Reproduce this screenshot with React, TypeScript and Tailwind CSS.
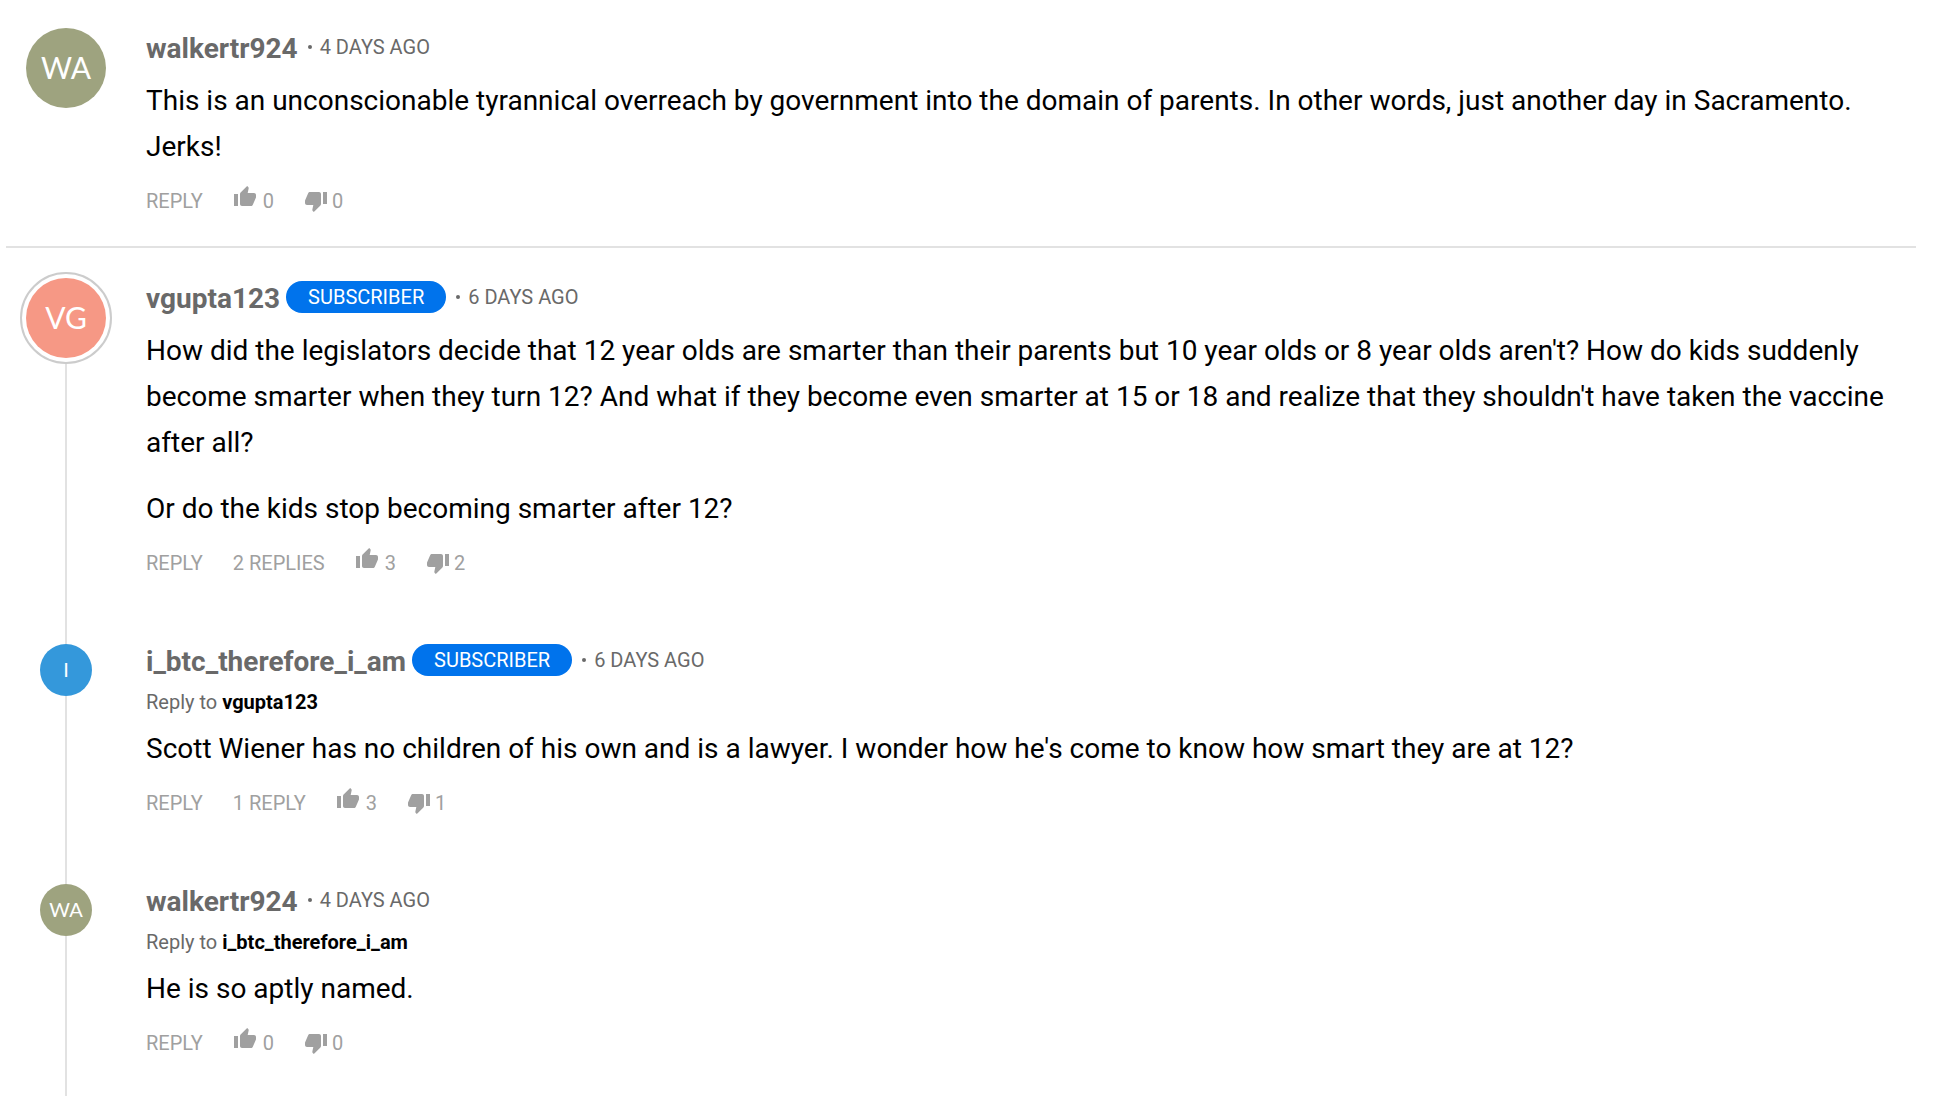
import { MdThumbDown, MdThumbUp } from "react-icons/md";

type Comment = {
  id: number;
  author: string;
  initials: string;
  color: string;
  subscriber?: boolean;
  age: string;
  replyTo?: string;
  paragraphs: string[];
  replies?: string;
  up: number;
  down: number;
};

const first: Comment = {
  id: 1,
  author: "walkertr924",
  initials: "WA",
  color: "bg-[#9ea37f]",
  age: "4 DAYS AGO",
  paragraphs: [
    "This is an unconscionable tyrannical overreach by government into the domain of parents. In other words, just another day in Sacramento. Jerks!",
  ],
  up: 0,
  down: 0,
};

const thread: Comment[] = [
  {
    id: 2,
    author: "vgupta123",
    initials: "VG",
    color: "bg-[#f69885]",
    subscriber: true,
    age: "6 DAYS AGO",
    paragraphs: [
      "How did the legislators decide that 12 year olds are smarter than their parents but 10 year olds or 8 year olds aren't? How do kids suddenly become smarter when they turn 12? And what if they become even smarter at 15 or 18 and realize that they shouldn't have taken the vaccine after all?",
      "Or do the kids stop becoming smarter after 12?",
    ],
    replies: "2 REPLIES",
    up: 3,
    down: 2,
  },
  {
    id: 3,
    author: "i_btc_therefore_i_am",
    initials: "I",
    color: "bg-[#3498db]",
    subscriber: true,
    age: "6 DAYS AGO",
    replyTo: "vgupta123",
    paragraphs: [
      "Scott Wiener has no children of his own and is a lawyer. I wonder how he's come to know how smart they are at 12?",
    ],
    replies: "1 REPLY",
    up: 3,
    down: 1,
  },
  {
    id: 4,
    author: "walkertr924",
    initials: "WA",
    color: "bg-[#9ea37f]",
    age: "4 DAYS AGO",
    replyTo: "i_btc_therefore_i_am",
    paragraphs: ["He is so aptly named."],
    up: 0,
    down: 0,
  },
];

const Avatar = ({ comment }: { comment: Comment }) => {
  if (comment.replyTo) {
    return (
      <>
        <div className="h-[9px] w-0.5 bg-[#e2e2e2]" />
        <div
          className={`flex size-[52px] items-center justify-center rounded-full pb-0.5 font-[Lato,sans-serif] text-xl text-white ${comment.color}`}
        >
          {comment.initials}
        </div>
      </>
    );
  }
  return (
    <div
      className={`rounded-full border-2 bg-white p-1 ${
        comment.subscriber ? "border-[#cccccc]" : "border-transparent"
      }`}
    >
      <div
        className={`flex size-20 items-center justify-center rounded-full pb-0.5 font-[Lato,sans-serif] text-3xl text-white ${comment.color}`}
      >
        {comment.initials}
      </div>
    </div>
  );
};

const Actions = ({ comment }: { comment: Comment }) => (
  <div className="mt-[19px] flex items-center gap-[30px] text-xl leading-6 text-[#a0a0a0]">
    <button type="button">REPLY</button>
    {comment.replies && <button type="button">{comment.replies}</button>}
    <button type="button" aria-label="Like" className="flex items-start gap-1.5">
      <MdThumbUp className="-mt-1 size-6" />
      {comment.up}
    </button>
    <button type="button" aria-label="Dislike" className="flex items-start gap-1">
      <MdThumbDown className="size-6" />
      {comment.down}
    </button>
  </div>
);

const CommentItem = ({
  comment,
  threaded,
}: {
  comment: Comment;
  threaded?: boolean;
}) => (
  <article className="flex">
    <div className="flex w-[92px] shrink-0 flex-col items-center">
      <Avatar comment={comment} />
      {threaded && <div className="w-0.5 flex-1 bg-[#e2e2e2]" />}
    </div>
    <div className={`ml-[34px] min-w-0 flex-1 ${threaded ? "pb-[60px]" : ""}`}>
      <header className="flex h-14 items-start pt-[9px]">
        <a href="#" className="text-[28px] leading-9 font-bold text-[#696969]">
          {comment.author}
        </a>
        {comment.subscriber && (
          <span className="ml-1.5 rounded-full bg-[#0073ec] px-[22px] text-xl leading-8 text-white">
            SUBSCRIBER
          </span>
        )}
        <span className="ml-2.5 flex items-center gap-2 text-xl leading-8 text-[#696969]">
          <span className="size-1 rounded-full bg-[#696969]" />
          {comment.age}
        </span>
      </header>
      {comment.replyTo && (
        <p className="h-[35px] text-xl leading-[22px] text-[#696969]">
          Reply to{" "}
          <a href="#" className="font-bold text-black">
            {comment.replyTo}
          </a>
        </p>
      )}
      <div className="space-y-5 text-[28px] leading-[46px]">
        {comment.paragraphs.map((p) => (
          <p key={p}>{p}</p>
        ))}
      </div>
      <Actions comment={comment} />
    </div>
  </article>
);

const App = () => (
  <main className="bg-white pt-[22px] pr-[34px] pl-1.5 font-[Roboto,sans-serif] text-black">
    <section className="border-b-2 border-[#e2e2e2] pb-[33px] pl-3.5">
      <CommentItem comment={first} />
    </section>
    <section className="pt-6 pl-3.5">
      {thread.map((c) => (
        <CommentItem key={c.id} comment={c} threaded />
      ))}
    </section>
  </main>
);

export default App;
